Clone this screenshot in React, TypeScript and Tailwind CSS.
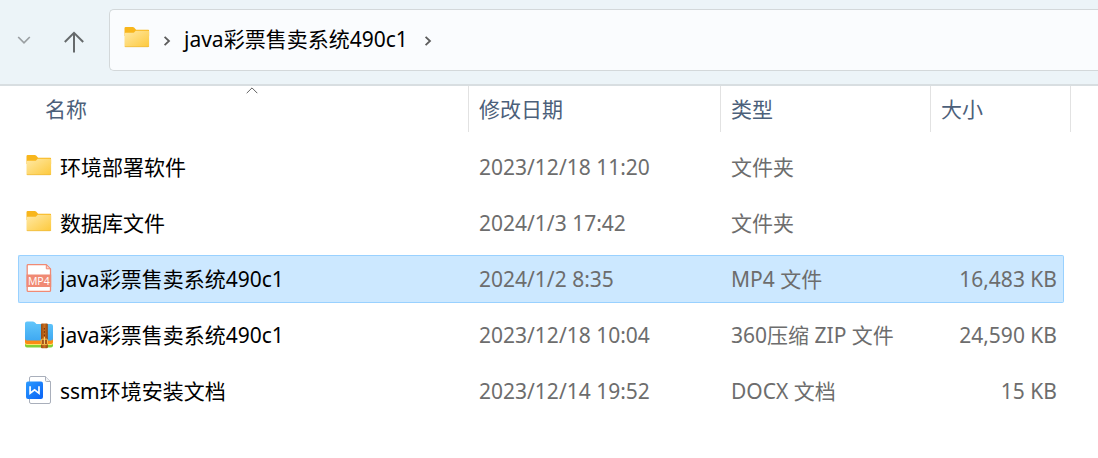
import React from "react";

type Kind = "folder" | "mp4" | "zip" | "docx";

interface Entry {
  name: string;
  date: string;
  type: string;
  size: string;
  kind: Kind;
  selected?: boolean;
}

const entries: Entry[] = [
  { name: "环境部署软件", date: "2023/12/18 11:20", type: "文件夹", size: "", kind: "folder" },
  { name: "数据库文件", date: "2024/1/3 17:42", type: "文件夹", size: "", kind: "folder" },
  { name: "java彩票售卖系统490c1", date: "2024/1/2 8:35", type: "MP4 文件", size: "16,483 KB", kind: "mp4", selected: true },
  { name: "java彩票售卖系统490c1", date: "2023/12/18 10:04", type: "360压缩 ZIP 文件", size: "24,590 KB", kind: "zip" },
  { name: "ssm环境安装文档", date: "2023/12/14 19:52", type: "DOCX 文档", size: "15 KB", kind: "docx" },
];

function FolderIcon() {
  return (
    <svg width="30" height="30" viewBox="-.5 0 30 30" aria-hidden="true" className="shrink-0">
      <defs>
        <linearGradient id="folderFront" x1="0" y1="0" x2="1" y2="1">
          <stop offset="0" stopColor="#ffe9a6" />
          <stop offset="1" stopColor="#fdc93c" />
        </linearGradient>
      </defs>
      <path d="M2 4.2Q2 3 3.200 3H10.200Q11 3 11.600 3.600L13.600 5.800H25.800Q26.600 5.800 26.600 7V12H2Z" fill="#f8b61c" />
      <path d="M2 10Q2 8.800 3.200 8.800H10.300Q11.200 8.800 11.800 8.200L13.200 6.800H25.600Q26.600 6.800 26.600 8V21.800Q26.600 23 25.600 23H3.200Q2 23 2 21.800Z" fill="url(#folderFront)" />
      <path d="M2.200 22Q2.400 22.700 3.200 22.700H25.600Q26.300 22.700 26.500 22" fill="none" stroke="#eeb73a" strokeWidth=".7" />
    </svg>
  );
}

function Mp4Icon() {
  return (
    <svg width="30" height="30" viewBox="-.5 1 30 30" aria-hidden="true" className="shrink-0">
      <path d="M3.700 1.600H21.600L26 6V27.400Q26 28.400 25 28.400H3.700Q2.700 28.400 2.700 27.400V2.600Q2.700 1.600 3.700 1.600Z" fill="#fff" stroke="#f08a74" strokeWidth="1.300" />
      <path d="M21.800 1.600V5.800H26Z" fill="#fbd5cc" stroke="#f08a74" strokeWidth="1" />
      <rect x="2" y="11.500" width="24.700" height="12.500" fill="#f08a74" />
      <text x="14.300" y="21.600" textAnchor="middle" fill="#fff" fontSize="10.500" fontWeight="500" fontFamily="Open Sans, sans-serif">MP4</text>
    </svg>
  );
}

function ZipIcon() {
  return (
    <svg width="30" height="30" viewBox="0 0 30 30" aria-hidden="true" className="shrink-0">
      <defs>
        <linearGradient id="zipBlue" x1="0" y1="0" x2="0" y2="1">
          <stop offset="0" stopColor="#62c6fb" />
          <stop offset="1" stopColor="#3fa9f2" />
        </linearGradient>
        <linearGradient id="zipBelt" x1="0" y1="0" x2="1" y2="0">
          <stop offset="0" stopColor="#9a4a12" />
          <stop offset=".5" stopColor="#c9701f" />
          <stop offset="1" stopColor="#8f420e" />
        </linearGradient>
      </defs>
      <path d="M1 20H29V25.500Q29 27.500 27 27.500H3Q1 27.500 1 25.500Z" fill="#84cf33" />
      <path d="M1 19H29V23.200Q29 25 27 25H3Q1 25 1 23.200Z" fill="#ffe36a" />
      <path d="M1 18H29V22Q29 24 27 24H3Q1 24 1 22Z" fill="#fb8b13" />
      <path d="M1 3.500Q1 1.500 3 1.500H8.500Q10 1.500 11 2.500L12.500 4H27Q29 4 29 6V18.500Q29 20.500 27 20.500H3Q1 20.500 1 18.500Z" fill="url(#zipBlue)" />
      <rect x="17" y="3.500" width="6.800" height="24.800" rx="1" fill="url(#zipBelt)" />
      <path d="M20.400 8V17" stroke="#7b3509" strokeWidth="1.200" strokeDasharray="1.500 1.800" />
      <rect x="17.300" y="19.200" width="6.200" height="5.400" rx=".8" fill="#a4541a" stroke="#ffc94e" strokeWidth=".9" />
      <path d="M20.400 17V24" stroke="#ffd879" strokeWidth="1" />
    </svg>
  );
}

function DocxIcon() {
  return (
    <svg width="30" height="30" viewBox="-.5 1 30 30" aria-hidden="true" className="shrink-0">
      <defs>
        <linearGradient id="docBlue" x1="0" y1="0" x2="1" y2="1">
          <stop offset="0" stopColor="#2b9bff" />
          <stop offset="1" stopColor="#0a62f5" />
        </linearGradient>
      </defs>
      <path d="M6.500 1.500H21L26 6.500V27Q26 28.500 24.500 28.500H6.500Q5 28.500 5 27V3Q5 1.500 6.500 1.500Z" fill="#fff" stroke="#a9afbb" />
      <path d="M21 1.500V5.500Q21 6.500 22 6.500H26" fill="#f1f2f5" stroke="#a9afbb" />
      <rect x="1.500" y="6.500" width="17" height="17.500" rx="2" fill="url(#docBlue)" />
      <path d="M5.600 11.200V18.300L10.100 14.900L14.500 18.300V11.200" fill="none" stroke="#fff" strokeWidth="1.700" />
    </svg>
  );
}

const icons: Record<Kind, () => React.ReactElement> = {
  folder: FolderIcon,
  mp4: Mp4Icon,
  zip: ZipIcon,
  docx: DocxIcon,
};

function Crumb() {
  return (
    <svg width="8" height="12" viewBox="0 0 8 12" fill="none" stroke="#5c5c5c" strokeWidth="1.800" aria-hidden="true">
      <path d="M1.600 1.800L6 6L1.600 10.200" />
    </svg>
  );
}

const heading = "h-[46px] border-l border-[#e2e2e2] pl-2.5 flex items-center";
const cell = "flex h-12 items-center border-y";
const plain = "border-transparent";
const picked = "border-[#99d1ff] bg-[#cce8ff]";

export default function App() {
  return (
    <main className="min-h-screen bg-white font-['Noto_Sans','Noto_Sans_CJK_SC',sans-serif] text-[21px] leading-7 text-black">
      <header className="flex h-[86px] items-start border-b-2 border-[#d8dee1] bg-[#ecf4f8] pt-[9px]">
        <button type="button" aria-label="最近浏览的位置" className="ml-2 flex h-[62px] w-8 items-center justify-center">
          <svg width="14" height="10" viewBox="0 0 14 10" fill="none" stroke="#9a9fa2" strokeWidth="1.700">
            <path d="M1.200 2L7 7.800L12.800 2" />
          </svg>
        </button>
        <button type="button" aria-label="向上" className="ml-4 flex h-[62px] w-9 items-center justify-center pt-1">
          <svg width="22" height="24" viewBox="0 0 22 24" fill="none" stroke="#666a6c" strokeWidth="2">
            <path d="M11 22.500V3M1.800 12L11 2.800L20.200 12" />
          </svg>
        </button>
        <nav aria-label="路径" className="ml-[17px] flex h-[62px] flex-1 items-center rounded-l-[5px] border border-r-0 border-[#d3d8da] bg-[#fafcfe] pb-0.5 pl-3">
          <FolderIcon />
          <span className="ml-[11px] mt-1">
            <Crumb />
          </span>
          <a href="#path" className="ml-[13px]">java彩票售卖系统490c1</a>
          <span className="ml-4 mt-1">
            <Crumb />
          </span>
        </nav>
      </header>

      <table className="w-full table-fixed border-separate border-spacing-0 text-left">
        <colgroup>
          <col className="w-[468px]" />
          <col className="w-[252px]" />
          <col className="w-[210px]" />
          <col className="w-[140px]" />
          <col />
        </colgroup>
        <thead className="text-[#4c607a]">
          <tr className="h-[53px] align-top">
            <th scope="col" aria-sort="ascending" className="relative p-0 font-normal">
              <div className="flex h-[46px] items-center pl-[45px]">名称</div>
              <svg width="12" height="7" viewBox="0 0 12 7" fill="none" stroke="#606060" className="absolute left-[246px] top-px">
                <path d="M.7 6.200L6 .9L11.300 6.200" />
              </svg>
            </th>
            <th scope="col" className="p-0 font-normal"><div className={heading}>修改日期</div></th>
            <th scope="col" className="p-0 font-normal"><div className={heading}>类型</div></th>
            <th scope="col" className="p-0 font-normal"><div className={heading}>大小</div></th>
            <td className="p-0"><div className={heading} /></td>
          </tr>
        </thead>
        <tbody className="text-[#6d6d6d]">
          {entries.map((e) => {
            const Icon = icons[e.kind];
            const tone = e.selected ? picked : plain;
            return (
              <tr key={e.name + e.kind} aria-selected={!!e.selected}>
                <td className="py-1 pl-[18px] pr-0">
                  <div className={`${cell} ${tone} gap-1.5 rounded-l-xs border-l pl-[5px] text-black`}>
                    <Icon />
                    <span className="truncate">{e.name}</span>
                  </div>
                </td>
                <td className="px-0 py-1"><div className={`${cell} ${tone} pl-[11px]`}>{e.date}</div></td>
                <td className="px-0 py-1"><div className={`${cell} ${tone} pl-[11px]`}>{e.type}</div></td>
                <td className="py-1 pl-0 pr-1.5">
                  <div className={`${cell} ${tone} justify-end rounded-r-xs border-r pr-1.5`}>{e.size}</div>
                </td>
                <td className="p-0" />
              </tr>
            );
          })}
        </tbody>
      </table>
    </main>
  );
}
